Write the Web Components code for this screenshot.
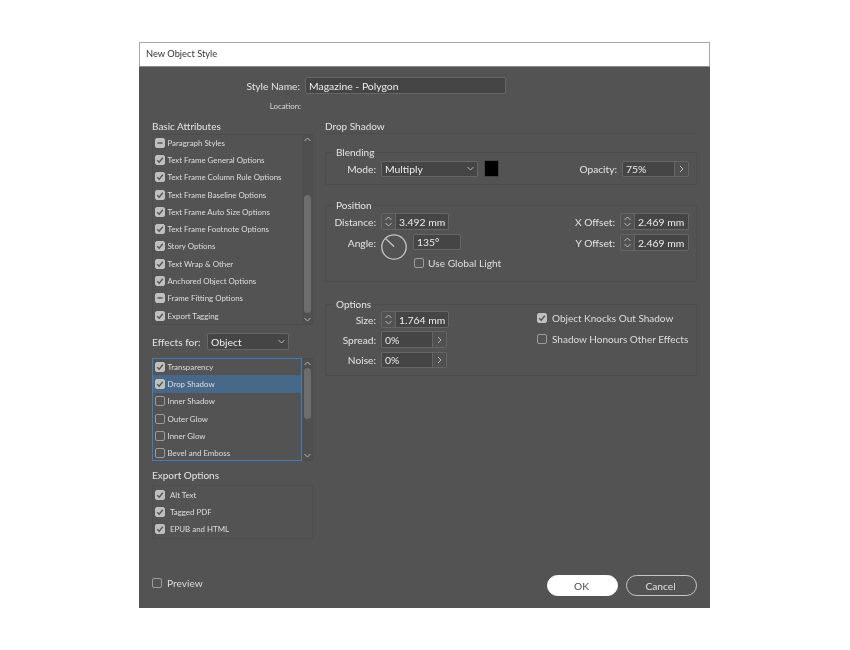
<!DOCTYPE html>
<html>
<head>
<meta charset="utf-8">
<title>New Object Style</title>
<style>
  html, body { margin: 0; background: #fff; }
  body { padding: 42px 0 0 139px; font: 10px Lato, sans-serif; color: #dcdcdc; }
</style>
</head>
<body>
<obj-dialog></obj-dialog>
<script>
const base = `
  * { box-sizing: border-box; }
  .lbl { color: #e4e4e4; white-space: nowrap; }
`;
const chevron = (d) => `<svg width="7" height="5" viewBox="0 0 7 5" fill="none" stroke="#b8b8b8" stroke-width="1"><path d="${d}"/></svg>`;
const chevronRight = `<svg width="5" height="8" viewBox="0 0 5 8" fill="none" stroke="#b8b8b8" stroke-width="1"><path d="M1 1 L4 4 L1 7"/></svg>`;

customElements.define("obj-check", class extends HTMLElement {
  constructor() {
    super();
    this.attachShadow({ mode: "open" });
  }
  connectedCallback() {
    const state = this.getAttribute("state") || "off";
    const mark = state === "on"
      ? `<svg width="10" height="10" viewBox="0 0 10 10" fill="none" stroke="#555" stroke-width="1.4"><path d="M2.2 5.2 L4.2 7.2 L7.8 2.8"/></svg>`
      : state === "mixed"
      ? `<svg width="10" height="10" viewBox="0 0 10 10" fill="none" stroke="#555" stroke-width="1.5"><path d="M2.5 5 H7.5"/></svg>`
      : "";
    this.shadowRoot.innerHTML = `
      <style>
        ${base}
        :host { display: flex; align-items: center; height: var(--row, 17.3px); padding-left: var(--pad, 2px); }
        .box { width: 10px; height: 10px; border-radius: 2px; flex: none; display: flex;
               border: 1px solid #9c9c9c; }
        .on, .mixed { background: #bfbfbf; border-color: #bfbfbf; }
        .box svg { margin: -1px; }
        .txt { margin-left: var(--tx, 2.5px); font-size: var(--fs, 7.9px); color: #dedede; white-space: nowrap; letter-spacing: var(--ls, 0); }
      </style>
      <span class="box ${state}">${mark}</span>
      <span class="txt"><slot></slot></span>
    `;
  }
});

customElements.define("obj-list", class extends HTMLElement {
  constructor() {
    super();
    this.attachShadow({ mode: "open" });
  }
  connectedCallback() {
    const top = this.getAttribute("thumb-top");
    const len = this.getAttribute("thumb-len");
    this.shadowRoot.innerHTML = `
      <style>
        ${base}
        :host { display: flex; border: 1px solid #4d4d4d; height: var(--h); }
        .rows { flex: 1; min-width: 0; padding-top: var(--rt, 0); overflow: hidden; }
        :host([focused]) .rows { border: 1px solid #3f7fb8; margin: -1px 0 -1px -1px; }
        .bar { width: 10px; flex: none; display: flex; flex-direction: column; align-items: center; background: #4f4f4f; }
        .arrow { height: 9px; display: flex; align-items: center; justify-content: center; }
        .track { flex: 1; width: 100%; display: flex; flex-direction: column; align-items: center; }
        .thumb { width: 7px; border-radius: 3.5px; background: #6d6d6d; margin-top: ${top}px; height: ${len}px; }
      </style>
      <div class="rows"><slot></slot></div>
      ${this.hasAttribute("plain") ? "" : `
      <div class="bar">
        <div class="arrow">${chevron("M0.5 4 L3.5 1 L6.5 4")}</div>
        <div class="track"><div class="thumb"></div></div>
        <div class="arrow">${chevron("M0.5 1 L3.5 4 L6.5 1")}</div>
      </div>`}
    `;
  }
});

customElements.define("obj-group", class extends HTMLElement {
  constructor() {
    super();
    this.attachShadow({ mode: "open" });
  }
  connectedCallback() {
    this.shadowRoot.innerHTML = `
      <style>
        ${base}
        :host { display: block; }
        fieldset { margin: 0; padding: 0 7px 0 0; border: 1px solid #4c4c4c; border-radius: 2px; height: var(--h);
                   display: flex; justify-content: space-between; }
        legend { margin-left: 8px; padding: 0 2px; height: 14px; line-height: 14px; font-size: 10px; color: #e4e4e4; }
      </style>
      <fieldset>
        <legend>${this.getAttribute("label")}</legend>
        <slot></slot>
      </fieldset>
    `;
  }
});

customElements.define("obj-field", class extends HTMLElement {
  constructor() {
    super();
    this.attachShadow({ mode: "open" });
  }
  connectedCallback() {
    const kind = this.getAttribute("kind") || "text";
    const w = this.getAttribute("w");
    const spin = kind === "spin" ? `
      <span class="spin">
        ${chevron("M0.5 4 L3.5 1 L6.5 4")}
        ${chevron("M0.5 1 L3.5 4 L6.5 1")}
      </span>` : "";
    const more = kind === "more" ? `<span class="more">${chevronRight}</span>` : "";
    const drop = kind === "select" ? `<span class="drop">${chevron("M0.5 1 L3.5 4 L6.5 1")}</span>` : "";
    this.shadowRoot.innerHTML = `
      <style>
        ${base}
        :host { display: flex; width: ${w}px; height: ${this.getAttribute("h") || 17}px; border: 1px solid #666; border-radius: 2px;
                background: #454545; font-size: 10.4px; color: #ececec; flex: none; }
        .val { flex: 1; padding: 0 3px; line-height: 14px; white-space: nowrap; overflow: hidden; display: flex; align-items: center; }
        .spin { width: 14px; flex: none; display: flex; flex-direction: column; align-items: center; justify-content: center;
                gap: 1px; background: #525252; border-right: 1px solid #666; }
        .more { width: 14px; flex: none; display: flex; align-items: center; justify-content: center; border-left: 1px solid #666; background: #505050; }
        .drop { flex: none; width: 14px; display: flex; align-items: center; justify-content: center; }
      </style>
      ${spin}<span class="val"><slot></slot></span>${more}${drop}
    `;
  }
});

customElements.define("obj-row", class extends HTMLElement {
  constructor() {
    super();
    this.attachShadow({ mode: "open" });
  }
  connectedCallback() {
    this.shadowRoot.innerHTML = `
      <style>
        ${base}
        :host { display: flex; align-items: center; margin-top: var(--mt, 0); }
        .lbl { width: var(--lw, 50px); text-align: right; margin-right: 5px; font-size: 10.2px; flex: none; padding-top: var(--lt, 0); }
      </style>
      <span class="lbl">${this.getAttribute("label")}</span>
      <slot></slot>
    `;
  }
});

customElements.define("obj-button", class extends HTMLElement {
  constructor() {
    super();
    this.attachShadow({ mode: "open" });
  }
  connectedCallback() {
    this.shadowRoot.innerHTML = `
      <style>
        ${base}
        :host { display: flex; align-items: center; justify-content: center; width: 71px; height: 21px; border-radius: 11px;
                font-size: 10.2px; border: 1px solid #c8c8c8; color: #e2e2e2; padding-right: 2px; }
        :host([primary]) { background: #fff; border-color: #fff; color: #4a4a4a; }
      </style>
      <slot></slot>
    `;
  }
});

customElements.define("obj-dialog", class extends HTMLElement {
  constructor() {
    super();
    this.attachShadow({ mode: "open" });
  }
  connectedCallback() {
    this.shadowRoot.innerHTML = `
      <style>
        ${base}
        :host { display: flex; flex-direction: column; width: 571px; height: 566px; background: #535353; font: 10.2px Lato, sans-serif; color: #e4e4e4; filter: blur(.2px); }
        .title { height: 25px; flex: none; background: #fff; border: 1px solid #a8a8a8; border-bottom: 1px solid #8a8a8a;
                 padding: 0 0 2px 6px; display: flex; align-items: center; color: #333; font-size: 9.3px; }
        .name { display: flex; align-items: center; margin-top: 10px; }
        .name .lbl { width: 161px; text-align: right; margin-right: 5px; }
        .loc { height: 12px; margin-top: 6px; width: 162px; text-align: right; font-size: 7.8px; line-height: 12px; color: #d8d8d8; }
        .main { flex: 1; display: grid; grid-template-columns: 161px 372px; column-gap: 12px; padding: 6px 13px 12px; min-height: 0; }
        .col { display: flex; flex-direction: column; min-height: 0; }
        h3 { margin: 0; font-weight: 400; font-size: 10px; height: 16px; line-height: 16px; color: #e4e4e4; flex: none; }
        .drop-head { border-bottom: 1px solid #4c4c4c; }
        .effects { display: flex; align-items: center; margin-top: 8px; }
        .effects .lbl { width: 55px; }
        .sel { background: #48688a; }
        .preview { margin-top: 38px; --pad: 0px; --tx: 5px; --fs: 10.2px; --row: 12px; }
        .stack { display: flex; flex-direction: column; }
        .dial-row { display: flex; align-items: flex-start; }
        .dial { flex: none; display: block; }
        .dial-side { margin-left: 6px; --pad: 1px; --tx: 4px; --fs: 10.2px; --row: 12px; }
        .dial-side obj-check { margin-top: 7px; }
        .opts { --pad: 0px; --tx: 5px; --fs: 10px; --row: 14px; width: 152px; gap: 7px; }
        .buttons { margin-top: auto; display: flex; justify-content: flex-end; gap: 8px; }
        .swatch { width: 15px; height: 17px; background: #000; border: 1px solid #444; margin-left: 6px; flex: none; }
      </style>
      <div class="title">New Object Style</div>
      <div class="name">
        <span class="lbl">Style Name:</span>
        <obj-field w="201">Magazine - Polygon</obj-field>
      </div>
      <div class="loc">Location:</div>
      <div class="main">
        <div class="col">
          <h3>Basic Attributes</h3>
          <obj-list thumb-top="51" thumb-len="118" style="--h:191px">
            <obj-check state="mixed" style="margin-top:-1px">Paragraph Styles</obj-check>
            <obj-check state="on">Text Frame General Options</obj-check>
            <obj-check state="on">Text Frame Column Rule Options</obj-check>
            <obj-check state="on">Text Frame Baseline Options</obj-check>
            <obj-check state="on">Text Frame Auto Size Options</obj-check>
            <obj-check state="on">Text Frame Footnote Options</obj-check>
            <obj-check state="on">Story Options</obj-check>
            <obj-check state="on">Text Wrap &amp; Other</obj-check>
            <obj-check state="on">Anchored Object Options</obj-check>
            <obj-check state="mixed">Frame Fitting Options</obj-check>
            <obj-check state="on">Export Tagging</obj-check>
          </obj-list>
          <div class="effects">
            <span class="lbl">Effects for:</span>
            <obj-field kind="select" w="82">Object</obj-field>
          </div>
          <obj-list focused thumb-top="0" thumb-len="51" style="--h:103px;margin-top:8px">
            <obj-check state="on" style="margin-top:-1px">Transparency</obj-check>
            <obj-check state="on" class="sel">Drop Shadow</obj-check>
            <obj-check>Inner Shadow</obj-check>
            <obj-check>Outer Glow</obj-check>
            <obj-check>Inner Glow</obj-check>
            <obj-check>Bevel and Emboss</obj-check>
          </obj-list>
          <h3 style="margin-top:6px">Export Options</h3>
          <obj-list plain style="--h:54px;--tx:5px;margin-top:2px">
            <obj-check state="on">Alt Text</obj-check>
            <obj-check state="on">Tagged PDF</obj-check>
            <obj-check state="on">EPUB and HTML</obj-check>
          </obj-list>
          <obj-check class="preview">Preview</obj-check>
        </div>
        <div class="col">
          <h3 class="drop-head">Drop Shadow</h3>
          <obj-group label="Blending" style="--h:40px;margin-top:11px">
            <div style="display:flex;align-items:center;height:17px;margin-top:1px">
              <obj-row label="Mode:"><obj-field kind="select" w="97" h="16">Multiply</obj-field></obj-row>
              <span class="swatch"></span>
            </div>
            <obj-row label="Opacity:" style="height:17px;margin-top:1px;--lw:60px">
              <obj-field kind="more" w="67" h="16">75%</obj-field>
            </obj-row>
          </obj-group>
          <obj-group label="Position" style="--h:84px;margin-top:13px">
            <div class="stack" style="margin-top:1px">
              <obj-row label="Distance:"><obj-field kind="spin" w="68">3.492 mm</obj-field></obj-row>
              <div class="dial-row" style="margin-top:4px">
                <obj-row label="Angle:" style="align-items:flex-start;--lt:3px">
                  <svg class="dial" width="26" height="26" viewBox="0 0 26 26" fill="none" stroke="#c6c6c6">
                    <circle cx="13" cy="13" r="12.2" stroke-width="1.3"/>
                    <path d="M4.5 4.5 L13 12.5" stroke-width="1.3"/>
                  </svg>
                </obj-row>
                <div class="dial-side">
                  <obj-field w="48" h="16">135°</obj-field>
                  <obj-check>Use Global Light</obj-check>
                </div>
              </div>
            </div>
            <div class="stack" style="margin-top:1px">
              <obj-row label="X Offset:"><obj-field kind="spin" w="69">2.469 mm</obj-field></obj-row>
              <obj-row label="Y Offset:" style="--mt:4px"><obj-field kind="spin" w="69">2.469 mm</obj-field></obj-row>
            </div>
          </obj-group>
          <obj-group label="Options" style="--h:79px;margin-top:15px">
            <div class="stack">
              <obj-row label="Size:"><obj-field kind="spin" w="68">1.764 mm</obj-field></obj-row>
              <obj-row label="Spread:" style="--mt:3px"><obj-field kind="more" w="66">0%</obj-field></obj-row>
              <obj-row label="Noise:" style="--mt:4px"><obj-field kind="more" w="66" h="16">0%</obj-field></obj-row>
            </div>
            <div class="stack opts">
              <obj-check state="on">Object Knocks Out Shadow</obj-check>
              <obj-check>Shadow Honours Other Effects</obj-check>
            </div>
          </obj-group>
          <div class="buttons">
            <obj-button primary>OK</obj-button>
            <obj-button>Cancel</obj-button>
          </div>
        </div>
      </div>
    `;
  }
});
</script>
</body>
</html>
